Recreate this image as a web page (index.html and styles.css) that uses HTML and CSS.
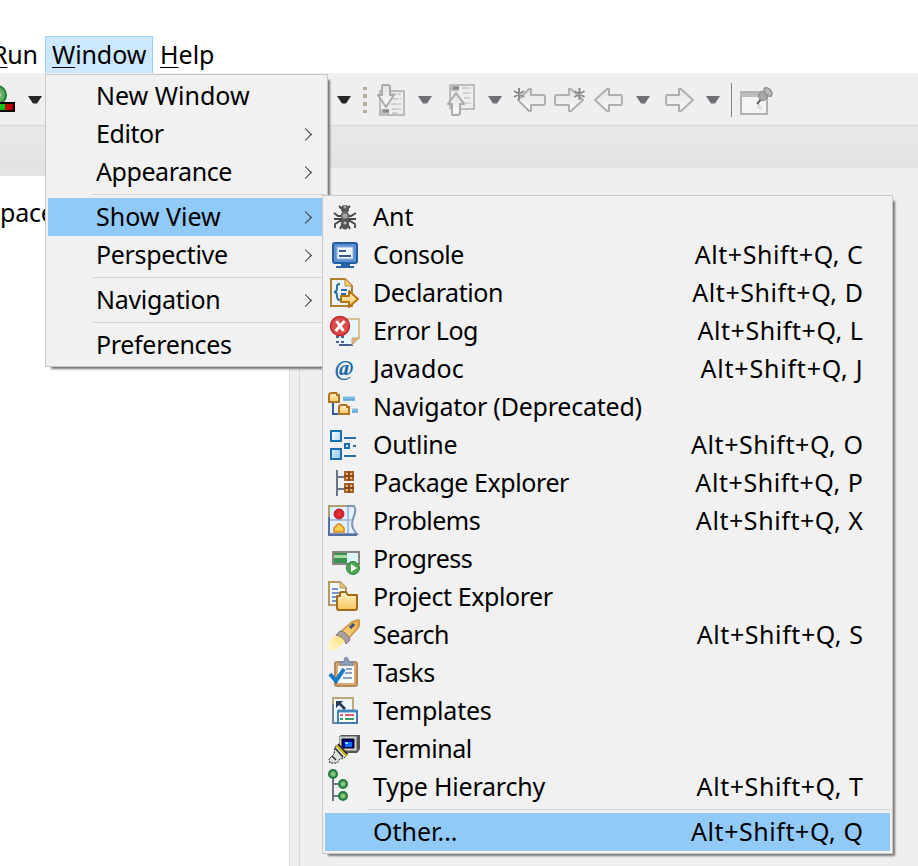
FILE: index.html
```
<!DOCTYPE html>
<html lang="en"><head><meta charset="utf-8"><title>Workbench</title><link rel="stylesheet" href="styles.css"></head>
<body>
<svg width="0" height="0" class="defs"><defs>
<linearGradient id="gold" x2="0" y2="1"><stop stop-color="#fff2c8"/><stop offset="1" stop-color="#f6c65c"/></linearGradient>
<linearGradient id="blue" x2="1" y2="1"><stop stop-color="#fff"/><stop offset="1" stop-color="#8cc4f4"/></linearGradient>
<linearGradient id="gray" x2="0" y2="1"><stop stop-color="#e2e2e2"/><stop offset="1" stop-color="#fafafa"/></linearGradient>
<radialGradient id="green"><stop stop-color="#a5dc8c"/><stop offset="1" stop-color="#3f9350"/></radialGradient>
<radialGradient id="red"><stop stop-color="#ef3a42"/><stop offset="1" stop-color="#c81928"/></radialGradient>
<linearGradient id="torch" x1="0" y1="1" x2="1" y2="0"><stop stop-color="#fffbd0"/><stop offset=".4" stop-color="#ffe08a"/><stop offset="1" stop-color="#e8a848"/></linearGradient>
</defs></svg>
<div class="app">
<nav class="menubar"><span class="top run"><u>R</u>un</span><span class="top open"><u>W</u>indow</span><span class="top help"><u>H</u>elp</span></nav>
<div class="toolbar">
<svg width="918" height="52" viewBox="0 73 918 52">
<circle cx="-3" cy="95" r="9.3" fill="url(#green)" stroke="#237536" stroke-width="1.5"/><path d="M-5 91l6 4-6 4z" fill="#fff"/><path d="M-2 103h16v8H-2z" fill="#c00000" stroke="#000" stroke-width="2"/><path d="M-2 104h7v6h-7z" fill="#00c41c"/>
<path d="M28 96h14l-5 7.500h-4z" fill="#262626"/><path d="M337 96h14l-5 7.500h-4z" fill="#262626"/>
<path d="M363 87h4v3h-4zm0 7h4v4h-4zm0 8h4v4h-4zm0 8h4v3h-4z" fill="#b7ae9f"/>
<path d="M380 91h24v24h-24z" fill="#eee" stroke="#bcbcbc" stroke-width="2"/><path d="M379 109h10v7h-10z" fill="#bcbcbc"/><path d="M383 111h6" stroke="#888" stroke-width="3"/><path d="M391 94h10m-8 5h8m-10 5h10m-9 5h9m-9 4h7" stroke="#cfcfcf" stroke-width="2" stroke-dasharray="6 1"/>
<path d="M383 85h5q2 0 2 2v8h4L386 107l-8-12h4v-8q0-2 1-2z" fill="url(#gray)" stroke="#aaa" stroke-width="2" stroke-linejoin="round"/>
<path d="M418 96h14l-5 7.500h-4zM488 96h14l-5 7.500h-4zM636 96h14l-5 7.500h-4zM706 96h14l-5 7.500h-4z" fill="#6d6f74"/>
<path d="M450 85h24v24h-24z" fill="#eee" stroke="#bcbcbc" stroke-width="2"/><path d="M449 84h10v7h-10z" fill="#bcbcbc"/><path d="M453 88h6" stroke="#888" stroke-width="3"/><path d="M462 88h9m-8 5h8m-7 5h7m-9 5h9" stroke="#cfcfcf" stroke-width="2" stroke-dasharray="6 1"/>
<path d="M447 109h8v2h-8z" fill="#efefef"/>
<path d="M456 93l8 11h-4v9q0 2-2 2h-5q-1 0-1-2v-9h-4z" fill="url(#gray)" stroke="#aaa" stroke-width="2" stroke-linejoin="round"/>
<g fill="url(#gray)" stroke="#b0b0b0" stroke-width="2" stroke-linejoin="round">
<path d="M595 100l12-11h2v6h11q2 0 2 2v6q0 2-2 2h-11v6h-2z"/>
<path d="M518 100l11-11h2v6h12q2 0 2 2v6q0 2-2 2h-12v6h-2z"/>
<path d="M583 100l-12 11h-2v-6h-12q-2 0-2-2v-6q0-2 2-2h12v-6h2z"/>
<path d="M693 100l-12 11h-2v-6h-11q-2 0-2-2v-6q0-2 2-2h11v-6h2z"/></g>
<path d="M519 88v12m-5-9l10 6m0-6l-10 6M579.500 88v12m-5-9l10 6m0-6l-10 6" stroke="#8c8c8c" stroke-width="2"/>
<path d="M731.500 83v34" stroke="#858585"/>
<path d="M741 92h26v22h-26z" fill="#f4f4f4" stroke="#b2b2b2" stroke-width="2"/><path d="M741 93h25v4h-25z" fill="#bcbcbc"/><path d="M759 101l-2 7 5 2z" fill="#ddd"/>
<path d="M757 104l6-7" stroke="#666" stroke-width="2"/><circle cx="763" cy="96" r="4.500" fill="#a8a8a8" stroke="#888"/><ellipse cx="768" cy="92" rx="3" ry="5" transform="rotate(-40 768 92)" fill="#b8b8b8" stroke="#8c8c8c" stroke-width="1.500"/>
</svg></div>
<div class="band"></div>
<main class="work"><section class="tree">pace</section><div class="sash"></div><section class="blank"></section></main>
</div>

<div class="menu window-menu">
<div class="item">New Window</div>
<div class="item t3">Editor<i class="chev"></i></div>
<div class="item t3">Appearance<i class="chev"></i></div>
<hr>
<div class="item on">Show View<i class="chev"></i></div>
<div class="item t2">Perspective<i class="chev"></i></div>
<hr>
<div class="item t2">Navigation<i class="chev"></i></div>
<hr>
<div class="item t2">Preferences</div>
</div>

<div class="menu view-menu">
<div class="item"><svg viewBox="0 0 34 38"><path d="M11 8l4 4m7-4l-4 4M6 15l4 3h13l5-3M6 21h22M7 30v-4l5-3h10l5 3v4M12 31l3-6m7 6l-3-6" fill="none" stroke="#454545" stroke-width="1.800"/><circle cx="17" cy="11" r="4" fill="#555"/><circle cx="17" cy="18" r="3.500" fill="#aaa" stroke="#666" stroke-width="2"/><ellipse cx="17" cy="26" rx="4" ry="5.500" fill="#555"/><circle cx="17" cy="9" r="1.500" fill="#aaa"/><circle cx="17" cy="25" r="1.500" fill="#bbb"/></svg><span>Ant</span></div>
<div class="item"><svg viewBox="0 0 34 38"><rect x="5" y="7" width="24" height="20" rx="2" fill="#5b91cf" stroke="#225da6" stroke-width="2"/><path d="M9 11h16v12H9z" fill="#f2f8ff" stroke="#8dafd9"/><path d="M11 15h7m-7 5h12" stroke="#3b5795" stroke-width="2"/><path d="M13 28h9v2h4v2H8v-2h5z" fill="#2963a8"/></svg><span class="t3">Console</span><kbd>Alt+Shift+Q, C</kbd></div>
<div class="item"><svg viewBox="0 0 34 38"><path d="M3 5h14l7 7v20H3z" fill="#edf5fc" stroke="#ad812d" stroke-width="2"/><path d="M17 5v7h7" fill="#f7d577" stroke="#b68c36"/><path d="M12 10q-4 0-3 4 0 4-3 4 3 0 3 4 0 4 3 4" fill="none" stroke="#2470ad" stroke-width="2"/><path d="M13 16h6m-6 4h5" stroke="#346aaa" stroke-width="2"/><path d="M13 22h8v-5l9 8-9 8v-5h-8z" fill="url(#gold)" stroke="#b47512" stroke-width="2" stroke-linejoin="round"/></svg><span class="t3">Declaration</span><kbd>Alt+Shift+Q, D</kbd></div>
<div class="item"><svg viewBox="0 0 34 38"><path d="M9 7h22v20l-6 6H9z" fill="#e6f7fe"/><path d="M17 7h14v20" fill="none" stroke="#d4c194" stroke-width="2"/><path d="M11 33h14M8 25h3m2 0h3m-8 5h3m2 0h3" stroke="#48618d" stroke-width="2"/><path d="M24 33v-7h7z" fill="#dab683" stroke="#c7a170"/><circle cx="12" cy="14" r="9.500" fill="#db4b4b" stroke="#bd2727" stroke-width="1.500"/><path d="M8.500 9l7 10m1-10l-9 10" stroke="#fff" stroke-width="3"/></svg><span class="t4">Error Log</span><kbd>Alt+Shift+Q, L</kbd></div>
<div class="item"><b class="at">@</b><span class="w1">Javadoc</span><kbd class="kj">Alt+Shift+Q, J</kbd></div>
<div class="item"><svg viewBox="0 0 34 38"><path d="M5 15v11h5" fill="none" stroke="#2b5ca9" stroke-width="2"/><path d="M1 14V7q0-2 3-2h4q1 0 1 2h2v7z" fill="url(#gold)" stroke="#af7425" stroke-width="2"/><path d="M11 26v-7q0-2 3-2h4q1 0 1 2h2v7z" fill="url(#gold)" stroke="#af7425" stroke-width="2"/><path d="M15 10.500h12m-3 12h6" stroke="#7dbde7" stroke-width="4"/><path d="M15 12h12m-3 12h6" stroke="#4d8ec7"/></svg><span class="t1">Navigator (Deprecated)</span></div>
<div class="item"><svg viewBox="0 0 34 38"><path d="M3 5h10v10H3zM3 23h10v10H3z" fill="url(#blue)" stroke="#1a6ead" stroke-width="2"/><path d="M17 18h4v4h-4z" fill="#dbf3ff" stroke="#1a6ead" stroke-width="2"/><path d="M16 12h12m-3 8h3m-12 10h12" stroke="#286f9f" stroke-width="2"/></svg><span class="t2">Outline</span><kbd>Alt+Shift+Q, O</kbd></div>
<div class="item"><svg viewBox="0 0 34 38"><path d="M9 6v26m0-19h9m-9 12h9" fill="none" stroke="#6b7487" stroke-width="2"/><path d="M17 8h8v8h-8zM17 20h8v8h-8z" fill="#f4b36b" stroke="#a7652e" stroke-width="2"/><path d="M21 7v10m-5-5h10m-5 7v10m-5-5h10" stroke="#85491c" stroke-width="2"/></svg><span class="t3">Package Explorer</span><kbd>Alt+Shift+Q, P</kbd></div>
<div class="item"><svg viewBox="0 0 34 38"><path d="M1 4h25q3 4-1 13-3 8 4 15H1z" fill="#e1f0ff" stroke="#8292b6" stroke-width="2"/><path d="M20 5v26M2 18h22" stroke="#a8bfdc" stroke-width="2"/><path d="M1 32V4h17" fill="none" stroke="#aaa16d" stroke-width="2"/><path d="M1 15v18h28" fill="none" stroke="#596da5" stroke-width="2"/><circle cx="11" cy="12" r="5" fill="url(#red)" stroke="#bb2639"/><path d="M6 30v-4l4-4h2l4 4v4z" fill="#ffcf44" stroke="#d58723" stroke-width="1.500"/></svg><span class="t4">Problems</span><kbd>Alt+Shift+Q, X</kbd></div>
<div class="item"><svg viewBox="0 0 34 38"><path d="M5 12h26v12H5z" fill="#def6f9" stroke="#8d8381" stroke-width="2"/><path d="M6 13h13v10H6z" fill="#39924e"/><path d="M6 15h13v3H6z" fill="#a9d9a2"/><circle cx="25" cy="28" r="6.500" fill="#4ea44e" stroke="#26823e"/><path d="M23 24v8l6-4z" fill="#fff"/></svg><span class="t4">Progress</span></div>
<div class="item"><svg viewBox="0 0 34 38"><path d="M1 4h11l6 6v17H1z" fill="#eff7ff" stroke="#b39b60" stroke-width="2"/><path d="M12 4v6h6" fill="#edc76d" stroke="#b39b60"/><path d="M4 11h6m-6 4h10m-10 4h6m-6 4h5" stroke="#7a93ca" stroke-width="2"/><path d="M9 30V18h3v-3q0-1 2-1h4l2 3h9v13q0 2-2 2H11q-2 0-2-2z" fill="url(#gold)" stroke="#a36b19" stroke-width="2" stroke-linejoin="round"/></svg><span class="t3">Project Explorer</span></div>
<div class="item"><svg viewBox="0 0 34 38"><path d="M0 26l8-7L24 6q4-2 7-2 1 5-1 8L17 25 8 34H0z" fill="url(#torch)"/><path d="M10 18l14-12q4-2 7-2 1 5-1 8L18 25" fill="none" stroke="#c99343" stroke-width="1.500"/><path d="M8 19l4-4q8 1 10 9l-4 4q-1-7-10-9z" fill="#aaa09f" stroke="#81777b"/><path d="M22 12l4-4" stroke="#304f83" stroke-width="3"/></svg><span class="t4">Search</span><kbd>Alt+Shift+Q, S</kbd></div>
<div class="item"><svg viewBox="0 0 34 38"><rect x="7" y="8" width="22" height="24" rx="2" fill="#daa96f" stroke="#b38959" stroke-width="2"/><path d="M10 12h16v17H10z" fill="#f7fbff"/><path d="M12 11V8h4q0-5 2-5t3 5h4v3z" fill="#8ba0c2" stroke="#7186aa"/><path d="M18 15h6m-7 4h7m-9 5h9" stroke="#6c83b8" stroke-width="1.500"/><path d="M2 20l6 7 8-12" fill="none" stroke="#167bc4" stroke-width="4"/></svg><span class="t1">Tasks</span></div>
<div class="item"><svg viewBox="0 0 34 38"><path d="M5 6h20v25H5z" fill="#edf7ff" stroke="#bda978" stroke-width="2"/><path d="M5 12v19h14" fill="none" stroke="#7184a8" stroke-width="2"/><path d="M10 19h19v12H10z" fill="#fff" stroke="#427eb3" stroke-width="2"/><path d="M10 19h19" stroke="#4187bd" stroke-width="3"/><path d="M12 23h3m2 0h9" stroke="#dd6068" stroke-width="2"/><path d="M12 27h3m2 0h9" stroke="#3c9b68" stroke-width="2"/><path d="M8 9h7l-2 2 5 5-2 2-5-5-3 3z" fill="#243b5c"/></svg><span class="t1">Templates</span></div>
<div class="item"><svg viewBox="0 0 34 38"><path d="M11 7l2-2h19v14l-3 4H12z" fill="#555"/><path d="M11.500 6.500h17v14h-17z" fill="#d0d0d0" stroke="#999"/><path d="M14 9h12v9H14z" fill="#000090" stroke="#000"/><path d="M17 12h7v5h-7z" fill="#0870f8"/><path d="M17 12h3v2h-3z" fill="#6de5fa"/><path d="M7 17l5-2 8 9-4 4-4 1-3 4H2l-1-4 5-5z" fill="#ddd" stroke="#222" stroke-dasharray="2 1"/><path d="M8 15l11 11" stroke="#c8b900" stroke-width="2"/><path d="M10 14l9 10M7 18l8 9M4 26l4 4" stroke="#222" stroke-width="1.300"/></svg><span class="t3">Terminal</span></div>
<div class="item"><svg viewBox="0 0 34 38"><path d="M5 10v23m0-17h8m-8 12h8" stroke="#6e7486" stroke-width="2"/><g fill="url(#green)" stroke="#237b42" stroke-width="2"><circle cx="5" cy="6" r="4"/><circle cx="15" cy="16" r="4"/><circle cx="15" cy="28" r="4"/></g></svg><span class="t1">Type Hierarchy</span><kbd>Alt+Shift+Q, T</kbd></div>
<hr>
<div class="item on"><span>Other...</span><kbd>Alt+Shift+Q, Q</kbd></div>
</div>
</body></html>
```
FILE: styles.css
```
*{box-sizing:border-box}
body{margin:0;width:918px;height:866px;overflow:hidden;background:#fff;color:#000;font:25px/36px "Noto Sans","Open Sans",sans-serif}
.defs{position:absolute}
.app{display:flex;flex-direction:column;height:866px}
.menubar{height:73px;display:flex;align-items:flex-end;flex:none}
.top{height:38px;line-height:36px;white-space:nowrap;margin-bottom:-1px}
u{text-decoration-thickness:1px;text-underline-offset:3px;text-decoration-skip-ink:none}
.run{width:45px;text-indent:-8px;letter-spacing:-.2px}
.open{width:108px;padding-left:6px;background:#cce8ff;border:1px solid #99d1ff;line-height:34px;letter-spacing:-.1px}
.help{padding-left:7px}
.toolbar{height:52px;background:#efefef;flex:none}
.toolbar svg{display:block}
.band{height:43px;background:linear-gradient(#e8e8e8,#e3e3e3);border-top:1px solid #d8d8d8;flex:none}
.work{display:flex;flex:1}
.tree{width:289px;padding-top:18px;border-top:8px solid #e4e4e4;letter-spacing:-.2px}
.sash{width:11px;background:#efefef;border:1px solid #d8d8d8;border-width:0 1px}
.blank{flex:1;background:#efefef}
.menu{position:absolute;background:#f1f1f1;border:1px solid #c9c9c9;padding:2px;box-shadow:4px 4px 2px -2px #777}
.window-menu{left:45px;top:74px;width:283px;height:293px}
.view-menu{left:322px;top:195px;width:571px;height:659px}
.item{height:38px;padding-bottom:2px;display:flex;align-items:center;white-space:nowrap}
.window-menu .item{padding-left:48px}
.view-menu .item{padding:0 27px 2px 3px}
.item svg{width:34px;height:38px;flex:none;margin-bottom:-2px}
.item span{margin-left:11px}
.t1{letter-spacing:-.22px}
.t2{letter-spacing:-.32px}
.t3{letter-spacing:-.43px}
.t4{letter-spacing:-.53px}
.w1{letter-spacing:.1px}
.on{background:#91c9f7}
.view-menu .on span{margin-left:45px}
.item kbd{font:inherit;margin-left:auto;letter-spacing:.57px;margin-right:-.5px}
.item .kj{letter-spacing:.8px}
hr{height:1px;border:0;background:#d4d4d4;margin:3px 0 3px 44px}
.chev{width:9px;height:9px;border:solid #333;border-width:1.5px 1.5px 0 0;transform:rotate(45deg);margin:0 15px -2px auto}
.at{width:34px;padding-left:7px;color:#176aa6;font:italic bold 22px/36px "Liberation Serif",serif;flex:none}
```
